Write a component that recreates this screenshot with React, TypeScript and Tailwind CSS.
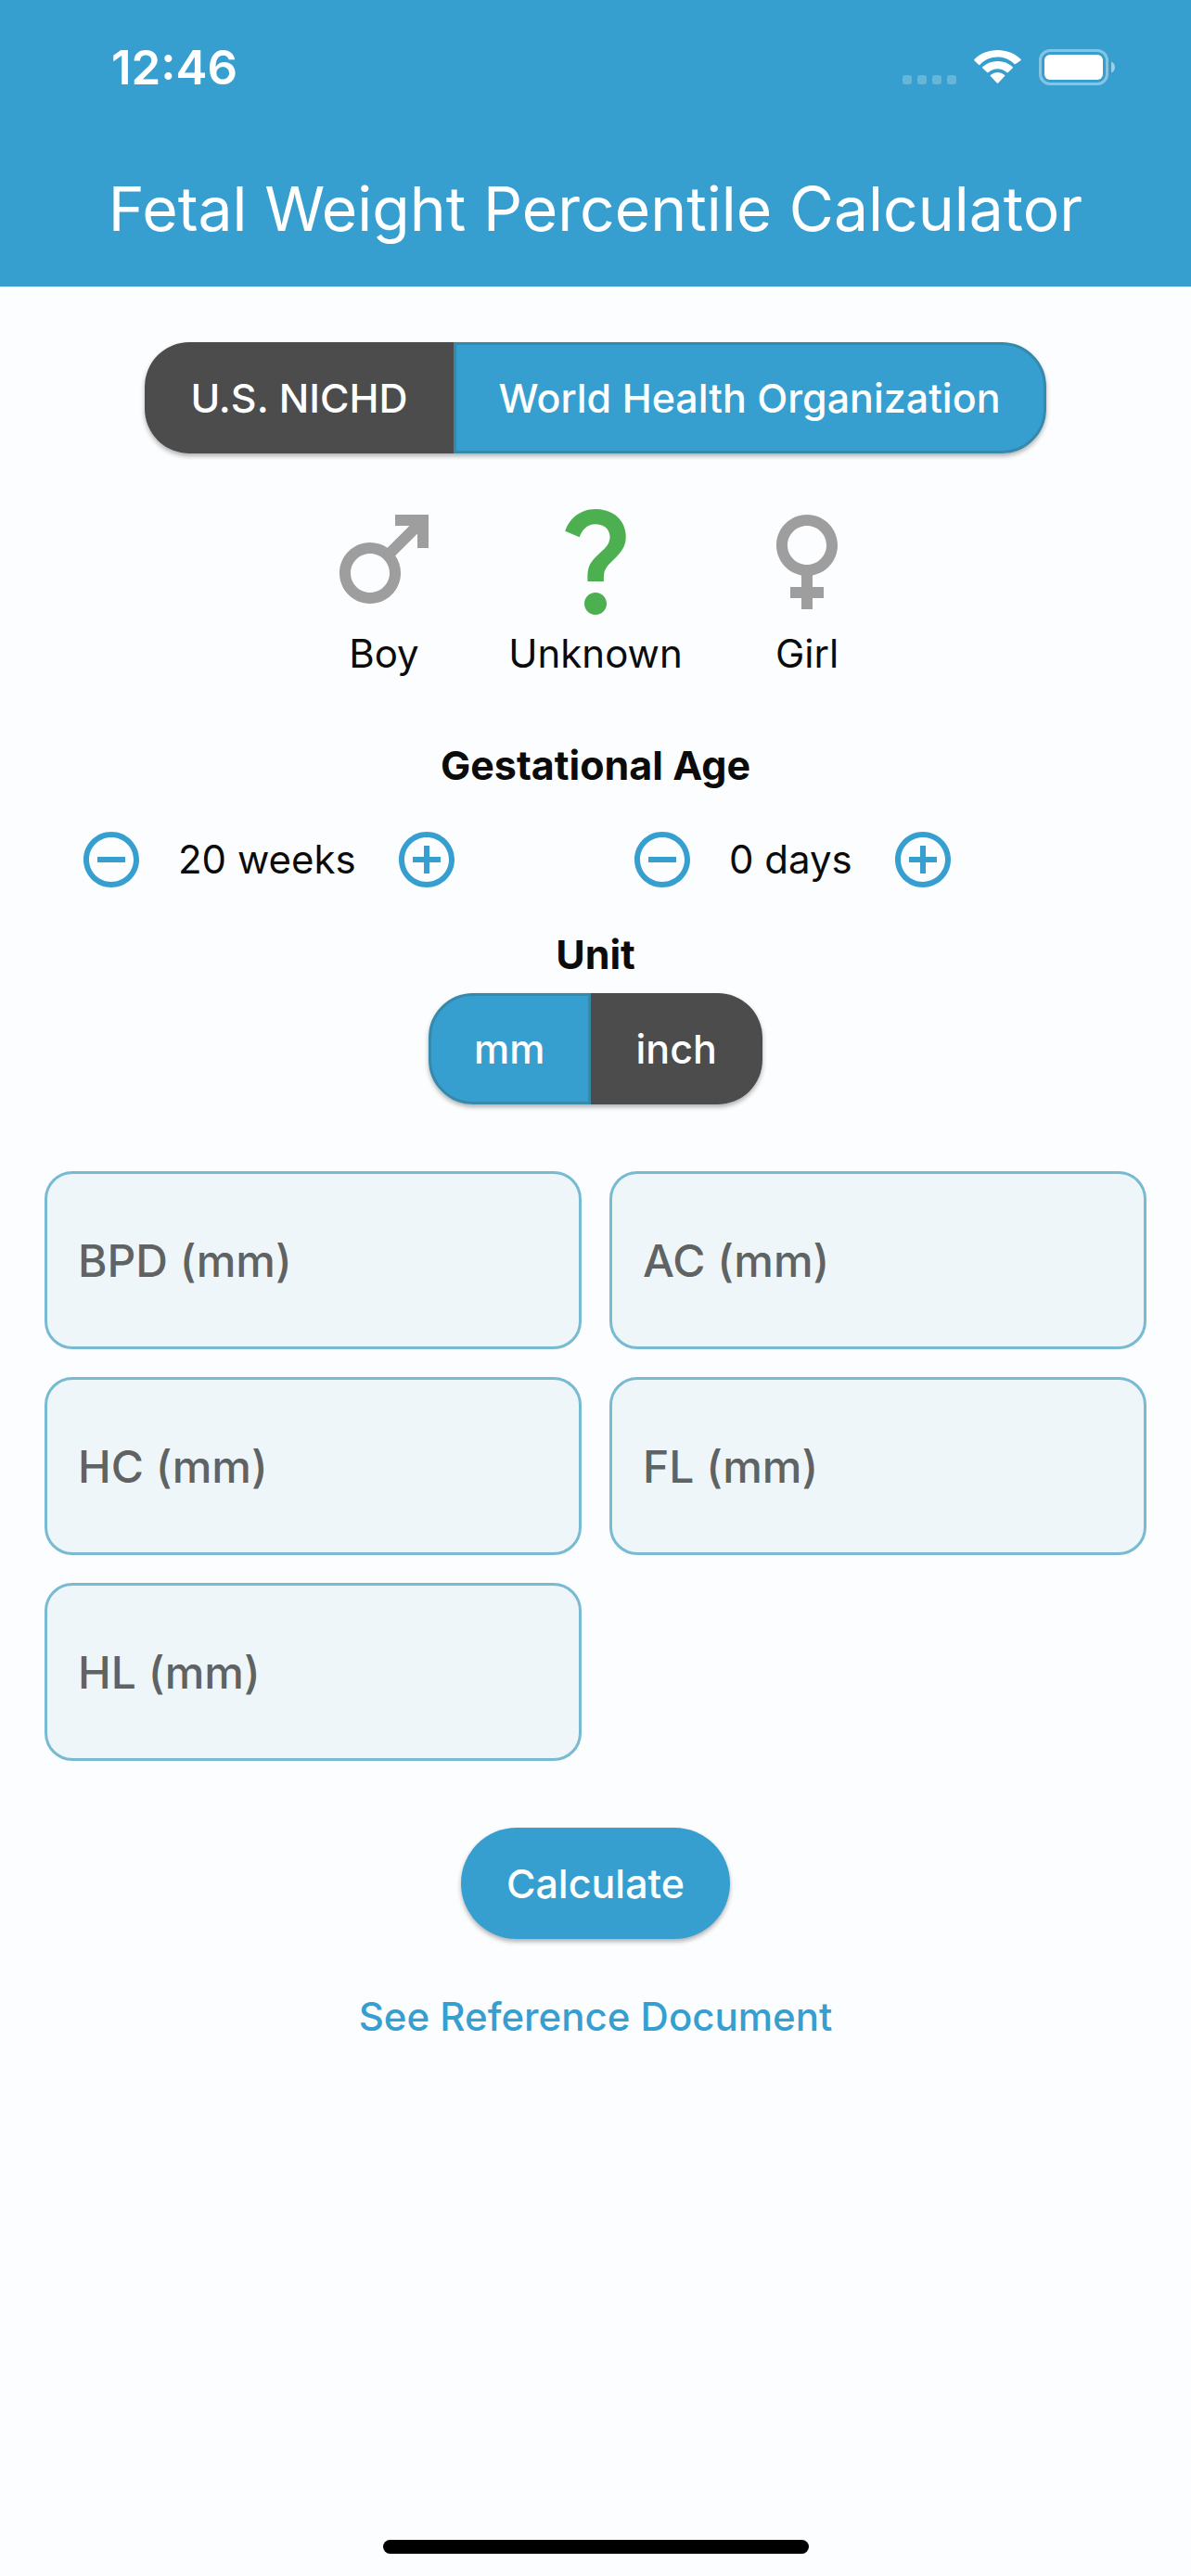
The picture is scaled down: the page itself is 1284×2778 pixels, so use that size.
import { useState } from "react";
import type { ReactNode } from "react";
import {
  MdAddCircleOutline,
  MdFemale,
  MdMale,
  MdQuestionMark,
  MdRemoveCircleOutline,
} from "react-icons/md";

const measurements = ["BPD", "AC", "HC", "FL", "HL"];

const genders = [
  { label: "Boy", Icon: MdMale, width: "w-36" },
  { label: "Unknown", Icon: MdQuestionMark, width: "w-48" },
  { label: "Girl", Icon: MdFemale, width: "w-36" },
];

const StatusBar = () => (
  <div className="flex h-[141px] items-start justify-between pl-[120px] pr-[82px] pt-[43px] text-white">
    <span className="text-[51px] font-semibold leading-[60px]">12:46</span>
    <div className="flex items-end gap-[19px] pt-[10px]">
      <svg width="58" height="39" viewBox="0 0 58 39" fill="#fff" fillOpacity="0.24">
        <rect x="0" y="28" width="10" height="10" rx="3" />
        <rect x="16" y="28" width="10" height="10" rx="3" />
        <rect x="32" y="28" width="10" height="10" rx="3" />
        <rect x="48" y="28" width="10" height="10" rx="3" />
      </svg>
      <svg width="51" height="39" viewBox="0 0 51 39" fill="#fff">
        <path d="M25.5 8.6c6.9 0 13.300 2.700 18 7.300.4.4.9.4 1.300 0l5.200-3.300c.9-.6 1-1.200.4-1.900C43.800 4.400 35 1 25.500 1S7.200 4.400.6 10.700c-.6.600-.6 1.200 0 1.800l4.400 4.300c.5.500 1 .5 1.500 0 4.900-5.300 11.800-8.200 19-8.200z" />
        <path d="M25.500 21.200c3.700 0 7.200 1.400 9.900 3.900.5.500 1 .5 1.500 0l4.700-4.500c.5-.5.5-1.100 0-1.600A23.500 23.500 0 0 0 25.500 13c-6 0-11.700 2.200-16.100 6-.5.500-.5 1.100 0 1.600l4.700 4.500c.5.500 1 .5 1.500 0 2.700-2.500 6.200-3.900 9.900-3.900z" />
        <path d="M33 29.200c.5-.5.5-1-.1-1.500A12 12 0 0 0 25.500 25a12 12 0 0 0-7.400 2.700c-.6.500-.6 1-.1 1.500l6.800 7.200c.5.500.9.500 1.400 0z" />
      </svg>
      <svg width="82" height="39" viewBox="0 0 82 39" fill="#fff">
        <rect x="1.500" y="1.500" width="72" height="36" rx="10.500" fill="none" stroke="#fff" strokeOpacity="0.4" strokeWidth="3" />
        <rect x="6" y="6" width="63" height="27" rx="6" />
        <path d="M78 13.500c2.500 1 4 3.300 4 6s-1.500 5-4 6z" fillOpacity="0.5" />
      </svg>
    </div>
  </div>
);

type SegmentedProps = {
  options: string[];
  value: string;
  onChange: (value: string) => void;
};

const Segmented = ({ options, value, onChange }: SegmentedProps) => (
  <div className="flex rounded-[48px] shadow-[0_3px_5px_rgba(0,0,0,0.3)]">
    {options.map((option) => (
      <button
        key={option}
        type="button"
        aria-pressed={option === value}
        onClick={() => onChange(option)}
        className={`h-[120px] text-[43px] font-medium text-white first:rounded-l-[48px] last:rounded-r-[48px] ${
          option === value
            ? "border-[3px] border-[#3589ab] bg-[#369fcf] px-[46px]"
            : "bg-[#4c4c4c] px-[49px]"
        }`}
      >
        {option}
      </button>
    ))}
  </div>
);

type StepperProps = {
  value: number;
  unit: string;
  max: number;
  onChange: (value: number) => void;
};

const Stepper = ({ value, unit, max, onChange }: StepperProps) => (
  <div className="flex items-center gap-9 pl-9">
    <button
      type="button"
      aria-label={`Fewer ${unit}`}
      onClick={() => onChange(Math.max(0, value - 1))}
      className="text-[#369fcf]"
    >
      <MdRemoveCircleOutline size={72} />
    </button>
    <span className="pr-1">
      {value} {unit}
    </span>
    <button
      type="button"
      aria-label={`More ${unit}`}
      onClick={() => onChange(Math.min(max, value + 1))}
      className="text-[#369fcf]"
    >
      <MdAddCircleOutline size={72} />
    </button>
  </div>
);

const Heading = ({ children }: { children: ReactNode }) => (
  <h2 className="text-center text-[43px] font-bold">{children}</h2>
);

export default function App() {
  const [standard, setStandard] = useState("World Health Organization");
  const [gender, setGender] = useState("Unknown");
  const [weeks, setWeeks] = useState(20);
  const [days, setDays] = useState(0);
  const [unit, setUnit] = useState("mm");

  return (
    <div className="flex min-h-screen flex-col bg-[#fcfdff] font-['Inter','Liberation_Sans',sans-serif] text-[42px] leading-[60px] text-[#0b0b0b]">
      <header className="bg-[#369fcf]">
        <StatusBar />
        <h1 className="flex h-[168px] items-center justify-center text-[66px] text-white">
          Fetal Weight Percentile Calculator
        </h1>
      </header>

      <main className="flex flex-1 flex-col px-12 pt-[60px]">
        <div className="flex justify-center">
          <Segmented
            options={["U.S. NICHD", "World Health Organization"]}
            value={standard}
            onChange={setStandard}
          />
        </div>

        <div className="mt-[42px] flex justify-center gap-[60px]">
          {genders.map(({ label, Icon, width }) => (
            <button
              key={label}
              type="button"
              aria-pressed={gender === label}
              onClick={() => setGender(label)}
              className={`flex flex-col items-center ${width}`}
            >
              <Icon
                size={144}
                className={gender === label ? "text-[#4caf50]" : "text-[#9e9e9e]"}
              />
              {label}
            </button>
          ))}
        </div>

        <div className="mt-[60px]">
          <Heading>Gestational Age</Heading>
          <div className="mt-9 grid grid-cols-2">
            <Stepper value={weeks} unit="weeks" max={42} onChange={setWeeks} />
            <Stepper value={days} unit="days" max={6} onChange={setDays} />
          </div>
        </div>

        <div className="mt-9 flex flex-col items-center gap-3">
          <Heading>Unit</Heading>
          <Segmented options={["mm", "inch"]} value={unit} onChange={setUnit} />
        </div>

        <form className="mt-[72px]" onSubmit={(e) => e.preventDefault()}>
          <div className="grid grid-cols-2 gap-[30px]">
            {measurements.map((name) => (
              <input
                key={name}
                type="text"
                inputMode="decimal"
                aria-label={`${name} (${unit})`}
                placeholder={`${name} (${unit})`}
                className="h-48 w-full rounded-[30px] border-[3px] border-[#79bad3] bg-[#eff6f9] px-[33px] text-[48px] font-medium placeholder:text-[#5f6364] placeholder:opacity-100"
              />
            ))}
          </div>
          <div className="mt-[72px] flex justify-center">
            <button
              type="submit"
              className="h-[120px] rounded-full bg-[#369fcf] px-[49px] text-[43px] font-medium text-white shadow-[0_3px_5px_rgba(0,0,0,0.3)]"
            >
              Calculate
            </button>
          </div>
        </form>

        <div className="mt-[54px] text-center">
          <a href="#reference" className="font-medium text-[#369fcf]">
            See Reference Document
          </a>
        </div>
      </main>

      <div className="flex justify-center pb-6">
        <div className="h-[15px] w-[459px] rounded-full bg-black" />
      </div>
    </div>
  );
}
